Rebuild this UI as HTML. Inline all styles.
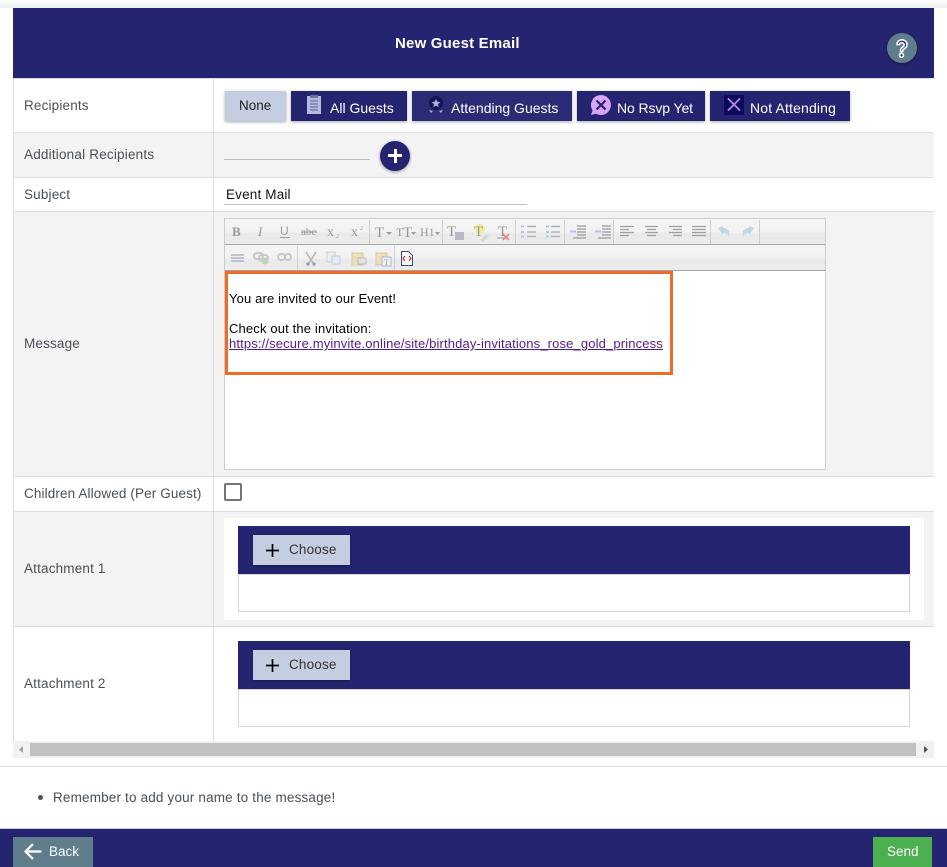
<!DOCTYPE html>
<html><head><meta charset="utf-8"><title>New Guest Email</title>
<style>
html,body{margin:0;padding:0;background:#fff}
body{width:947px;height:867px;position:relative;overflow:hidden;font-family:"Liberation Sans",Arial,sans-serif;font-size:13.5px;color:#495057}
.a{position:absolute;box-sizing:border-box}
.t{position:absolute;white-space:nowrap;line-height:16px;letter-spacing:.17px}
.hl{position:absolute;left:13px;width:921px;height:1px;background:#dcdcdc}
.btn{position:absolute;top:91px;height:30px;background:#252470;color:#fff;box-shadow:0 1px 3px rgba(0,0,0,.35);white-space:nowrap;font-size:14px}
.btn span{position:absolute;top:9px;line-height:16px}
.btn svg{position:absolute}
.tb svg{position:absolute;left:0;top:0}
.m{font-size:13px;color:#000;letter-spacing:.15px}
</style></head><body>
<div class="a" style="left:0;top:0;width:947px;height:8px;background:linear-gradient(#fff,#ececec)"></div>
<div class="a" style="left:13px;top:8px;width:921px;height:70px;background:#252470"></div>
<div class="t" style="left:395px;top:36px;color:#fff;font-weight:bold;font-size:15px;letter-spacing:.2px">New Guest Email</div>
<div class="a" style="left:887px;top:33px;width:30px;height:30px;border-radius:50%;background:#607d8b;box-shadow:0 1px 3px rgba(0,0,0,.4)"></div>
<svg class="a" style="left:887px;top:33px" width="30" height="30" viewBox="0 0 30 30"><path d="M10 11.500a5 4.600 0 1 1 8.200 3.500c-1.600 1.200-2.400 1.800-2.600 3.500h-2.200c0-2.800 1.300-3.700 2.700-4.800a2.300 2.200 0 1 0-3.500-2.200z" fill="#252470" stroke="#fff" stroke-width="1.600"/><circle cx="14.500" cy="22.300" r="2" fill="#252470" stroke="#fff" stroke-width="1.600"/></svg>

<!-- row backgrounds -->
<div class="a" style="left:13px;top:133px;width:921px;height:44px;background:#f3f3f3"></div>
<div class="a" style="left:13px;top:212px;width:921px;height:264px;background:#f3f3f3"></div>
<div class="a" style="left:13px;top:512px;width:921px;height:114px;background:#f3f3f3"></div>
<div class="hl" style="top:78px"></div>
<div class="hl" style="top:132px"></div>
<div class="hl" style="top:177px"></div>
<div class="hl" style="top:211px"></div>
<div class="hl" style="top:476px"></div>
<div class="hl" style="top:511px"></div>
<div class="hl" style="top:626px"></div>
<div class="a" style="left:13px;top:78px;width:1px;height:663px;background:#dcdcdc"></div>
<div class="a" style="left:213px;top:78px;width:1px;height:663px;background:#dcdcdc"></div>

<!-- labels -->
<div class="t" style="left:24px;top:98px">Recipients</div>
<div class="t" style="left:24px;top:147px;letter-spacing:.2px">Additional Recipients</div>
<div class="t" style="left:24px;top:187px">Subject</div>
<div class="t" style="left:24px;top:336px">Message</div>
<div class="t" style="left:24px;top:486px;letter-spacing:.12px">Children Allowed (Per Guest)</div>
<div class="t" style="left:24px;top:561px">Attachment 1</div>
<div class="t" style="left:24px;top:676px">Attachment 2</div>

<!-- recipient buttons -->
<div class="btn" style="left:225px;width:61px;background:#c5cde0;color:#222"><span style="left:14px;top:7px;font-size:13.5px">None</span></div>
<div class="btn" style="left:291px;width:116px"><svg style="left:15px;top:4px" width="17" height="20" viewBox="0 0 17 20"><rect x="1" y="1" width="14" height="18" fill="#b5bcdb"/><rect x="4" y="0" width="8" height="3" fill="#6f74a8"/><path d="M4 6h8M4 9h8M4 12h8M4 15h8" stroke="#5a5f98" stroke-width="1"/></svg><span style="left:39px">All Guests</span></div>
<div class="btn" style="left:412px;width:160px;background:#2c2b76"><svg style="left:14px;top:4px" width="20" height="20" viewBox="0 0 20 20"><circle cx="10" cy="8" r="7" fill="#141457"/><path d="M10 4l1.300 2.700 3 .4-2.200 2 .6 3-2.700-1.500-2.700 1.500.6-3-2.200-2 3-.4z" fill="#a9aed8"/><path d="M3 15l2 3 2-2zM17 15l-2 3-2-2z" fill="#a9aed8"/></svg><span style="left:39px">Attending Guests</span></div>
<div class="btn" style="left:577px;width:128px"><svg style="left:14px;top:4px" width="20" height="20" viewBox="0 0 20 20"><path d="M10 0a10 10 0 1 1-5 18.700L0 20l1.600-4.600A10 10 0 0 1 10 0z" fill="#d9a4f5"/><path d="M5.500 5.500l9 9M14.500 5.500l-9 9" stroke="#252470" stroke-width="2.200"/></svg><span style="left:40px;letter-spacing:-.1px">No Rsvp Yet</span></div>
<div class="btn" style="left:710px;width:140px"><svg style="left:14px;top:4px" width="20" height="20" viewBox="0 0 20 20"><rect width="20" height="20" fill="#0c0a5e"/><path d="M4 3.500l12 12M16 3.500l-12 12" stroke="#b98ae0" stroke-width="1.800"/></svg><span style="left:40px;letter-spacing:.15px">Not Attending</span></div>

<!-- additional -->
<div class="a" style="left:224px;top:159px;width:146px;height:1px;background:#bdbdbd"></div>
<div class="a" style="left:380px;top:141px;width:30px;height:30px;border-radius:50%;background:#252470;box-shadow:0 1px 3px rgba(0,0,0,.4)"></div>
<div class="a" style="left:388px;top:154px;width:14px;height:3px;background:#fff"></div>
<div class="a" style="left:393.500px;top:148.500px;width:3px;height:14px;background:#fff"></div>

<!-- subject -->
<div class="t" style="left:226px;top:187px;color:#111">Event Mail</div>
<div class="a" style="left:224px;top:204px;width:303px;height:1px;background:#bdbdbd"></div>

<!-- editor -->
<div class="a" style="left:224px;top:218px;width:602px;height:252px;background:#fff;border:1px solid #ccc"></div>
<div class="a" style="left:225px;top:219px;width:600px;height:25px;background:linear-gradient(#f5f5f5,#f2f2f2 50%,#e9e9e9 60%,#ececec)"></div>
<div class="a" style="left:225px;top:244px;width:600px;height:1px;background:#a6a6a6"></div>
<div class="a" style="left:225px;top:245px;width:600px;height:25px;background:linear-gradient(#f5f5f5,#f2f2f2 50%,#e9e9e9 60%,#ececec)"></div>
<div class="a" style="left:225px;top:270px;width:600px;height:1px;background:#a6a6a6"></div>
<div class="a tb" style="left:0;top:0;width:947px;height:280px">
<svg width="947" height="280" viewBox="0 0 947 280" font-family="Liberation Serif,serif" fill="#9a9a9a">
<g stroke="#cfcfcf"><path d="M369.500 220v24M442.500 220v24M515.500 220v24M564.500 220v24M613.500 220v24M710.500 220v24M759.500 220v24M297.500 246v24M394.500 246v24"/></g>
<text x="232" y="236" font-size="13" font-weight="bold">B</text>
<text x="258" y="236" font-size="13" font-style="italic">I</text>
<text x="280" y="235" font-size="12" font-family="Liberation Sans,sans-serif">U</text><path d="M280 237.500h10" stroke="#999"/>
<text x="301" y="235" font-size="11">abc</text><path d="M301 232h16" stroke="#999"/>
<text x="327" y="236" font-size="14">x</text><text x="336" y="238" font-size="6" fill="#8aa">2</text>
<text x="351" y="236" font-size="14">x</text><text x="360" y="230" font-size="6" fill="#8aa">2</text>
<text x="375" y="237" font-size="15">T</text><path d="M386 232h6l-3 3z"/>
<text x="396" y="236" font-size="12">T</text><text x="403" y="237" font-size="15">T</text><path d="M411 232h5l-2.500 3z"/>
<text x="420" y="236" font-size="12">H1</text><path d="M435 232h5l-2.500 3z"/>
<text x="447" y="236" font-size="15">T</text><rect x="455" y="232" width="9" height="8" fill="#b9b6c8"/>
<circle cx="480" cy="229" r="5" fill="#f0ee9a"/><text x="474" y="236" font-size="15">T</text><path d="M480 240l7-6 2 2-6 6z" fill="#d8d8d8"/>
<text x="498" y="236" font-size="15">T</text><path d="M497 238h9" stroke="#999"/><path d="M503 234l6 6M509 234l-6 6" stroke="#e47b7b" stroke-width="1.500"/>
<g stroke="#a8a8a8" stroke-width="1.200"><path d="M527 226.500h9M527 232h9M527 236.500h9M551 226.500h9M551 232h9M551 236.500h9"/><path d="M521 226.500h3M521 232h3M521 236.500h3M546 226.500h3M546 232h3M546 236.500h3" stroke="#b8c4dc" stroke-width="2"/></g>
<g stroke="#a8a8a8" stroke-width="1.500"><path d="M577 226h9M577 229h9M577 232h9M577 235h9M573 238h13M602 226h9M602 229h9M602 232h9M602 235h9M598 238h13"/><path d="M570 231.500h6M595 231.500h6" stroke="#b8c4dc" stroke-width="2"/></g>
<g stroke="#a0a0a0" stroke-width="1.200"><path d="M620 226.500h14M620 229.500h9M620 232.500h14M620 235.500h9M645 226.500h13M647 229.500h9M645 232.500h13M647 235.500h9M669 226.500h13M673 229.500h9M669 232.500h13M673 235.500h9M692 226.500h14M692 229.500h14M692 232.500h14M692 235.500h14"/></g>
<path d="M718 228l5-2v2c5 0 7 3 6 9-1-3-3-4-6-4v2z" fill="#c6d2e6"/><path d="M754 228l-5-2v2c-5 0-7 3-6 9 1-3 3-4 6-4v2z" fill="#c6d2e6"/>
<g stroke="#a8a8a8" stroke-width="1.200"><path d="M231 255h13M231 258h13"/><path d="M231 261h13" stroke="#b8c4dc" stroke-width="2"/></g>
<g fill="none" stroke="#c8c8c8" stroke-width="2"><rect x="254" y="253" width="9" height="6" rx="3"/><rect x="259" y="255" width="9" height="6" rx="3"/><rect x="278" y="254" width="7" height="6" rx="3"/><rect x="285" y="254" width="6" height="6" rx="3"/></g><circle cx="265" cy="261" r="3.500" fill="#bcd4bc"/>
<path d="M306 252l5 8 5-8M311 260l-3 4M311 260l3 4" fill="none" stroke="#b5b5b5" stroke-width="1.500"/><circle cx="308" cy="264" r="1.800" fill="#9aa6c4"/><circle cx="314" cy="264" r="1.800" fill="#9aa6c4"/>
<rect x="327" y="252" width="8" height="10" fill="#eee" stroke="#ccc"/><rect x="332" y="256" width="8" height="8" fill="#e6ecf6" stroke="#bcc7dc"/>
<rect x="352" y="253" width="11" height="12" fill="#ecdfba" stroke="#d3c7a0"/><rect x="358" y="258" width="8" height="6" fill="#dfe2e9" stroke="#bbb"/>
<rect x="376" y="253" width="11" height="12" fill="#ecdfba" stroke="#d3c7a0"/><rect x="382" y="257" width="9" height="9" fill="#eef1f7" stroke="#a8b6d0"/><text x="384" y="265" font-size="8">T</text>
<path d="M401.500 251.500h7l4 4v10h-11z" fill="#fff" stroke="#2f4f7f"/><path d="M405 256l-2 2.500 2 2.500M409 256l2 2.500-2 2.500" fill="none" stroke="#d22" stroke-width="1.200"/>
</svg></div>

<!-- orange box -->
<div class="a" style="left:225px;top:271px;width:448px;height:104px;border:3px solid #f26a28"></div>
<div class="t m" style="left:229px;top:291px;line-height:15px">You are invited to our Event!</div>
<div class="t m" style="left:229px;top:321px;line-height:15px">Check out the invitation:<br><span style="color:#551a8b;text-decoration:underline;letter-spacing:.14px">https://secure.myinvite.online/site/birthday-invitations_rose_gold_princess</span></div>

<!-- checkbox -->
<div class="a" style="left:224px;top:483px;width:18px;height:18px;border:2px solid #757575;border-radius:2px;background:#fff"></div>

<!-- attachment 1 -->
<div class="a" style="left:224px;top:518px;width:700px;height:102px;background:#fff"></div>
<div class="a" style="left:238px;top:526px;width:672px;height:48px;background:#252470"></div>
<div class="a" style="left:238px;top:574px;width:672px;height:38px;border:1px solid #d5d5d5;background:#fff"></div>
<div class="a" style="left:253px;top:535px;width:97px;height:30px;background:#c5cde0;box-shadow:0 1px 3px rgba(0,0,0,.35)"></div>
<svg class="a" style="left:266px;top:544px" width="13" height="13"><path d="M6.500 0v13M0 6.500h13" stroke="#000" stroke-width="1.700"/></svg>
<div class="t" style="left:289px;top:542px;color:#333">Choose</div>

<!-- attachment 2 -->
<div class="a" style="left:238px;top:641px;width:672px;height:48px;background:#252470"></div>
<div class="a" style="left:238px;top:689px;width:672px;height:38px;border:1px solid #d5d5d5;background:#fff"></div>
<div class="a" style="left:253px;top:650px;width:97px;height:30px;background:#c5cde0;box-shadow:0 1px 3px rgba(0,0,0,.35)"></div>
<svg class="a" style="left:266px;top:659px" width="13" height="13"><path d="M6.500 0v13M0 6.500h13" stroke="#000" stroke-width="1.700"/></svg>
<div class="t" style="left:289px;top:657px;color:#333">Choose</div>

<!-- scrollbar -->
<div class="a" style="left:13px;top:741px;width:921px;height:17px;background:#f1f1f1"></div>
<div class="a" style="left:30px;top:743px;width:886px;height:13px;background:#c1c1c1"></div>
<svg class="a" style="left:13px;top:741px" width="921" height="17"><path d="M10 5v7l-4-3.500z" fill="#a3a3a3"/><path d="M911 5v7l4-3.500z" fill="#505050"/></svg>
<div class="a" style="left:0;top:766px;width:947px;height:1px;background:#dcdcdc"></div>

<!-- note -->
<div class="a" style="left:38px;top:795px;width:5px;height:5px;border-radius:50%;background:#495057"></div>
<div class="t" style="left:53px;top:790px">Remember to add your name to the message!</div>

<!-- footer -->
<div class="a" style="left:0;top:828px;width:947px;height:39px;background:#252470;border-top:1px solid #c9c9d6"></div>
<div class="a" style="left:13px;top:837px;width:80px;height:30px;background:#607d8b"></div>
<svg class="a" style="left:23px;top:842px" width="20" height="20"><path d="M18.500 9.500H3M10 2L2.500 9.500 10 17" fill="none" stroke="#fff" stroke-width="2.200"/></svg>
<div class="t" style="left:49px;top:844px;color:#fff;letter-spacing:0">Back</div>
<div class="a" style="left:873px;top:837px;width:59px;height:30px;background:#4caf50"></div>
<div class="t" style="left:887px;top:844px;color:#fff;letter-spacing:0">Send</div>
</body></html>
